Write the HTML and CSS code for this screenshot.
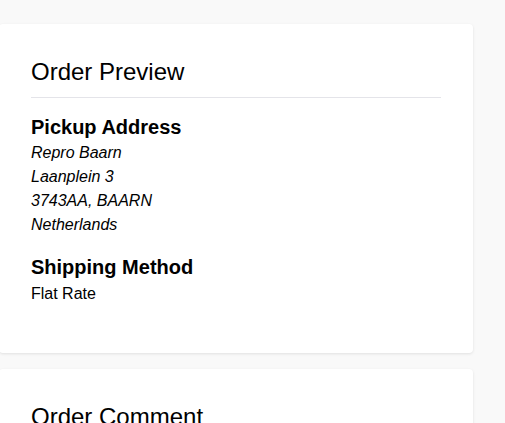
FILE: index.html
```html
<!DOCTYPE html>
<html lang="en">
<head>
<meta charset="utf-8">
<title>Order Preview</title>
<link rel="stylesheet" href="styles.css">
</head>
<body>
<main class="column">
  <section class="card">
    <h2 class="card-title">Order Preview</h2>
    <div class="block">
      <h3 class="block-title">Pickup Address</h3>
      <address class="address">
        Repro Baarn<br>
        Laanplein 3<br>
        3743AA, BAARN<br>
        Netherlands
      </address>
    </div>
    <div class="block">
      <h3 class="block-title">Shipping Method</h3>
      <p class="value">Flat Rate</p>
    </div>
  </section>
  <section class="card">
    <h2 class="card-title">Order Comment</h2>
    <div class="block">
      <p class="value">&nbsp;</p>
    </div>
  </section>
</main>
</body>
</html>
```
FILE: styles.css
```css
html, body {
  margin: 0;
  padding: 0;
  background: #f9f9f9;
  font-family: "Liberation Sans", Arial, sans-serif;
  color: #000;
  overflow: hidden;
}

.column {
  display: flex;
  flex-direction: column;
  gap: 16px;
  width: 474px;
  margin-left: -1px;
  padding-top: 24px;
}

.card {
  background: #fff;
  border-radius: 4px;
  box-shadow: 0 1px 3px rgba(0, 0, 0, 0.1);
  padding: 33px 32px 47px;
}

.card-title {
  margin: 0;
  font-size: 24px;
  font-weight: 400;
  line-height: 29px;
  padding-bottom: 11px;
  border-bottom: 1px solid #e4e4e9;
}

.block {
  margin-top: 15px;
}

.block + .block {
  margin-top: 16px;
}

.block-title {
  margin: 0;
  font-size: 20px;
  font-weight: 700;
  line-height: 28px;
}

.block + .block .block-title {
  margin-bottom: 1px;
}

.address {
  font-style: italic;
  font-size: 16px;
  line-height: 24px;
}

.value {
  margin: 0;
  font-size: 16px;
  line-height: 24px;
}
```
